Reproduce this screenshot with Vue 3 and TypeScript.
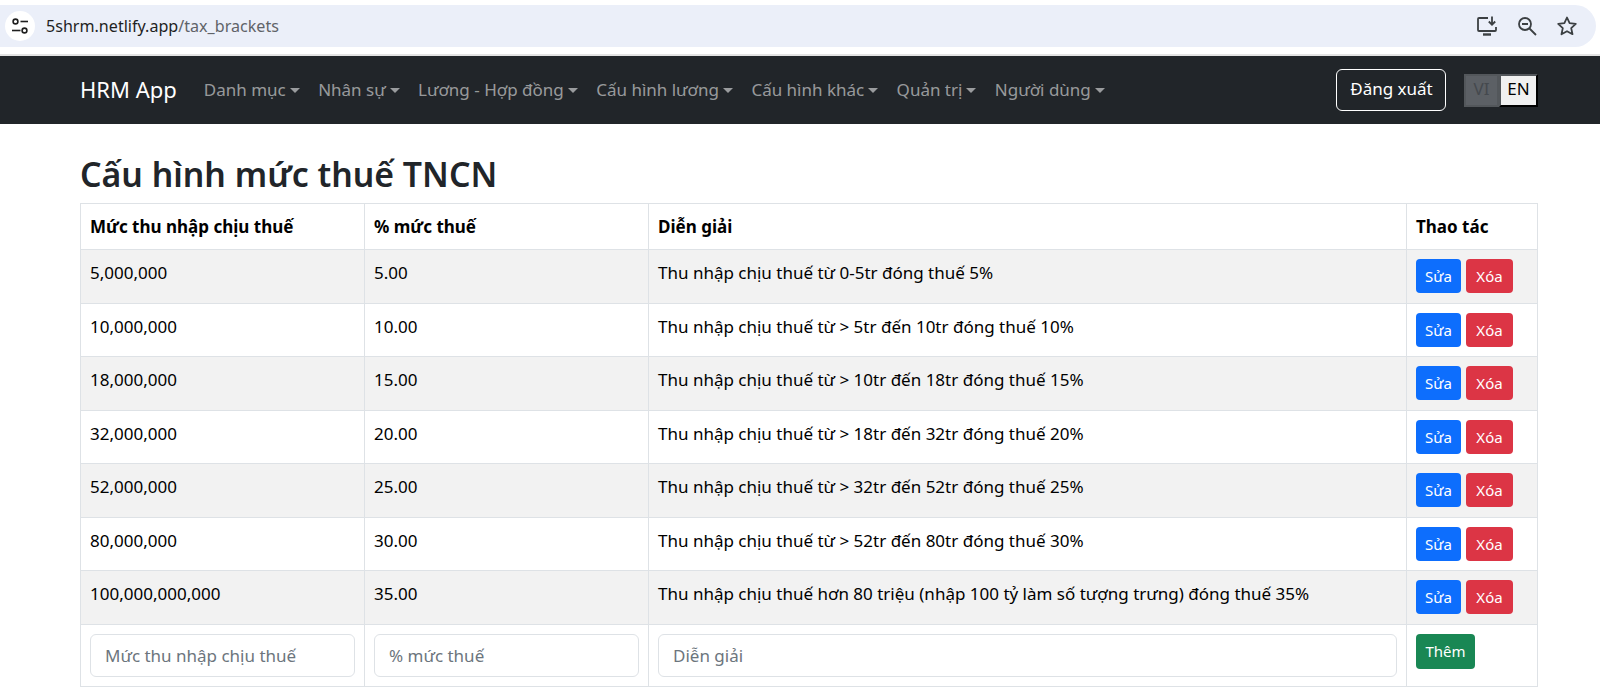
<script setup lang="ts">
interface Row { income: string; rate: string; note: string }
const menus: string[] = ['Danh mục', 'Nhân sự', 'Lương - Hợp đồng', 'Cấu hình lương', 'Cấu hình khác', 'Quản trị', 'Người dùng']
const rows: Row[] = [
  { income: '5,000,000', rate: '5.00', note: 'Thu nhập chịu thuế từ 0-5tr đóng thuế 5%' },
  { income: '10,000,000', rate: '10.00', note: 'Thu nhập chịu thuế từ > 5tr đến 10tr đóng thuế 10%' },
  { income: '18,000,000', rate: '15.00', note: 'Thu nhập chịu thuế từ > 10tr đến 18tr đóng thuế 15%' },
  { income: '32,000,000', rate: '20.00', note: 'Thu nhập chịu thuế từ > 18tr đến 32tr đóng thuế 20%' },
  { income: '52,000,000', rate: '25.00', note: 'Thu nhập chịu thuế từ > 32tr đến 52tr đóng thuế 25%' },
  { income: '80,000,000', rate: '30.00', note: 'Thu nhập chịu thuế từ > 52tr đến 80tr đóng thuế 30%' },
  { income: '100,000,000,000', rate: '35.00', note: 'Thu nhập chịu thuế hơn 80 triệu (nhập 100 tỷ làm số tượng trưng) đóng thuế 35%' },
]
</script>

<template>
  <div class="page">
    <div class="chrome">
      <div class="omnibox">
        <span class="site-chip">
          <svg width="18" height="18" viewBox="0 0 18 18" fill="none" stroke="#1f1f1f" stroke-width="1.6">
            <circle cx="4.5" cy="4.5" r="2.4" /><path d="M9.5 4.5H17" />
            <circle cx="13.5" cy="13.5" r="2.4" /><path d="M1 13.5h8.5" />
          </svg>
        </span>
        <span class="url"><span class="host">5shrm.netlify.app</span>/tax_brackets</span>
        <span class="tools">
          <svg width="24" height="24" viewBox="0 0 24 24" fill="none" stroke="#3c4043" stroke-width="1.8">
            <path d="M13 4H4a1 1 0 0 0-1 1v11a1 1 0 0 0 1 1h16a1 1 0 0 0 1-1v-3" />
            <path d="M8 20.5h8" stroke-width="2.4" />
            <path d="M17 2.5v8M13.8 7.5l3.2 3.2 3.2-3.2" />
          </svg>
          <svg width="24" height="24" viewBox="0 0 24 24" fill="none" stroke="#3c4043" stroke-width="1.8">
            <circle cx="10" cy="10" r="6" /><path d="M14.5 14.5L21 21M7 10h6" />
          </svg>
          <svg width="24" height="24" viewBox="0 0 24 24" fill="none" stroke="#3c4043" stroke-width="1.8" stroke-linejoin="round">
            <path d="M12 3.5l2.6 5.7 6.2.7-4.6 4.2 1.3 6.1L12 17.2l-5.5 3 1.3-6.1-4.6-4.2 6.2-.7z" />
          </svg>
        </span>
      </div>
    </div>

    <nav class="navbar">
      <a class="brand">HRM App</a>
      <ul class="menu">
        <li v-for="m in menus" :key="m" class="menu-item">{{ m }}<i class="caret"></i></li>
      </ul>
      <button class="logout" type="button">Đăng xuất</button>
      <div class="lang">
        <button class="lang-vi" type="button">VI</button>
        <button class="lang-en" type="button">EN</button>
      </div>
    </nav>

    <main class="content">
      <h2 class="title">Cấu hình mức thuế TNCN</h2>
      <table class="grid">
        <colgroup>
          <col class="c1" /><col class="c2" /><col class="c3" /><col class="c4" />
        </colgroup>
        <thead>
          <tr>
            <th>Mức thu nhập chịu thuế</th>
            <th>% mức thuế</th>
            <th>Diễn giải</th>
            <th>Thao tác</th>
          </tr>
        </thead>
        <tbody>
          <tr v-for="(r, i) in rows" :key="r.income" :class="{ odd: i % 2 === 0 || i === 6 }">
            <td>{{ r.income }}</td>
            <td>{{ r.rate }}</td>
            <td>{{ r.note }}</td>
            <td class="actions">
              <button class="btn blue" type="button">Sửa</button>
              <button class="btn red" type="button">Xóa</button>
            </td>
          </tr>
          <tr class="form-row">
            <td><input class="field" placeholder="Mức thu nhập chịu thuế" /></td>
            <td><input class="field" placeholder="% mức thuế" /></td>
            <td><input class="field" placeholder="Diễn giải" /></td>
            <td class="actions"><button class="btn green" type="button">Thêm</button></td>
          </tr>
        </tbody>
      </table>
    </main>
  </div>
</template>

<style>
html, body { margin: 0; background: #fff; overflow: hidden; }
</style>

<style scoped>
.page { font-family: "Noto Sans", "Liberation Sans", sans-serif; color: #212529; font-size: 17px; }
.chrome { height: 54px; padding-top: 5px; box-sizing: border-box; border-bottom: 0; background: #fff; }
.omnibox { height: 42px; width: 1596px; border-radius: 0 21px 21px 0; background: #ebeff9; display: flex; align-items: center; box-sizing: border-box; padding-left: 5px; }
.site-chip { width: 30px; height: 30px; border-radius: 50%; background: #fff; display: flex; align-items: center; justify-content: center; }
.url { margin-left: 11px; font-size: 16.1px; color: #5f6368; flex: 1; }
.host { color: #1f1f1f; }
.tools { display: flex; gap: 16px; padding-right: 17px; }
.navbar { height: 70px; box-sizing: border-box; border-top: 2px solid #e3e3e3; background: #212529; display: flex; align-items: center; padding: 0 62px 0 80px; }
.brand { color: #fff; font-size: 22px; margin-right: 27px; margin-bottom: 2px; }
.menu { list-style: none; display: flex; margin: 0 0 2px; padding: 0; flex: 1; gap: 18.4px; }
.menu-item { color: rgba(255, 255, 255, .55); white-space: nowrap; }
.caret { display: inline-block; margin-left: 4px; vertical-align: 3px; border-top: 5px solid currentColor; border-left: 5px solid transparent; border-right: 5px solid transparent; }
.logout { width: 110px; height: 42px; background: transparent; color: #fff; border: 1px solid #fff; border-radius: 6px; font: inherit; padding: 0 0 3px 1px; box-sizing: border-box; }
.lang { display: flex; margin-left: 18px; }
.lang button { height: 33px; padding: 0 0 3px; font: inherit; box-sizing: border-box; }
.lang-vi { width: 35px; background: #5c6065; color: #45494e; border: 2px solid #53575b; }
.lang-en { width: 39px; background: #f0f0f0; color: #000; border: 2px outset #000; border-color: #53575b #000 #000 #53575b; }
.content { padding: 0 62px 0 80px; }
.title { margin: 0; height: 79px; box-sizing: border-box; padding-top: 25px; font-size: 33.8px; font-weight: 600; line-height: 50px; color: #212529; }
.grid { width: 1457px; border-collapse: collapse; table-layout: fixed; color: #000; }
.c1, .c2 { width: 284px; }
.c3 { width: 758px; }
.c4 { width: 131px; }
th, td { border: 1px solid #dee2e6; padding: 9px; text-align: left; vertical-align: top; box-sizing: border-box; }
th { height: 46px; line-height: 27px; font-weight: 700; }
td { height: 53.5px; line-height: 27px; }
.odd td { background: #f2f2f2; }
.actions { padding-top: 9px; white-space: nowrap; font-size: 0; }
.btn { height: 34px; border: 0; border-radius: 4px; color: #fff; font-family: inherit; font-size: 15px; padding: 0; line-height: 34px; vertical-align: top; }
.blue { width: 45px; background: #0d6efd; margin-right: 5px; }
.red { width: 47px; background: #dc3545; }
.green { width: 59px; height: 35px; background: #198754; }
.form-row td { height: 62px; }
.field { display: block; width: 100%; height: 43px; box-sizing: border-box; border: 1px solid #dee2e6; border-radius: 6px; background: #fff; padding: 0 14px; font: inherit; color: #212529; }
.field::placeholder { color: #6c757d; opacity: 1; }
</style>
